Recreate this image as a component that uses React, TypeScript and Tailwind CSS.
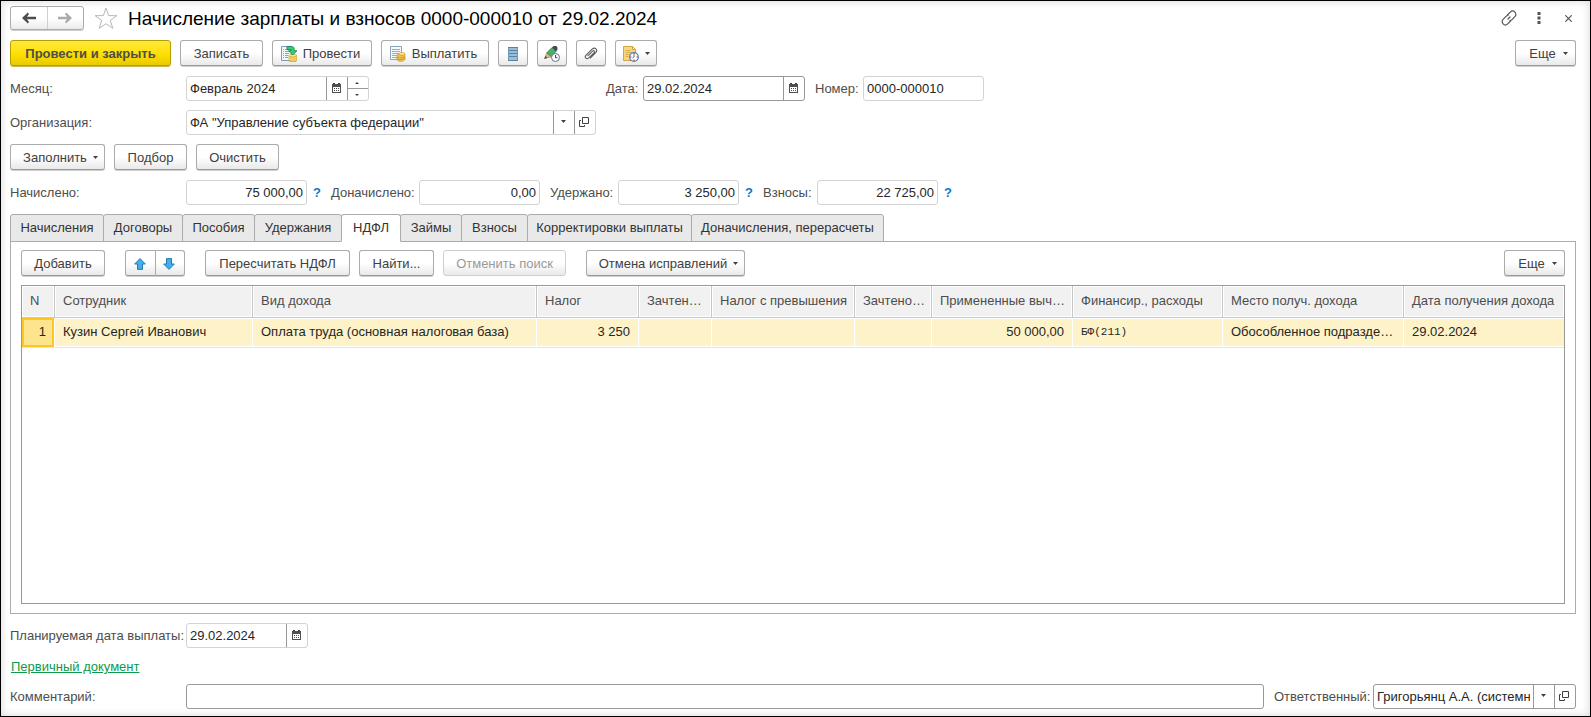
import { useState } from "react";
import type { ReactNode } from "react";
import clsx from "clsx";

/* ---------- Icons ---------- */

const NavArrow = ({ back }: { back?: boolean }) => (
  <svg width="16" height="12" viewBox="0 0 16 12" className={back ? "" : "rotate-180"}>
    <path d="M6.8.5 1 6l5.8 5.500L8 10 6 7.300h9V4.700H6L8 2Z" fill="currentColor" />
  </svg>
);

const Star = () => (
  <svg width="24" height="23" viewBox="0 0 24 23" fill="none" stroke="#b3b6ba">
    <path d="M12 1.2 14.7 8.6 22.8 8.7 16.3 13.5 18.8 21.3 12 16.7 5.2 21.3 7.7 13.5 1.2 8.7 9.3 8.6Z" />
  </svg>
);

const Caret = () => (
  <svg width="5" height="3" viewBox="0 0 5 3" className="shrink-0">
    <path d="M0 0h5L2.5 3Z" fill="#404040" />
  </svg>
);

const CaretSmall = ({ up }: { up?: boolean }) => (
  <svg width="4" height="2" viewBox="0 0 4 2" className={up ? "rotate-180" : ""}>
    <path d="M0 0h4L2 2Z" fill="#404040" />
  </svg>
);

const Calendar = () => (
  <svg width="9" height="10" viewBox="0 0 9 10" shapeRendering="crispEdges">
    <path d="M0 1h9v9H0Z" fill="#505050" />
    <path d="M1 0h2v1H1ZM6 0h2v1H6Z" fill="#404040" />
    <path d="M1 4h7v5H1Z" fill="#fff" />
    <path d="M2 5h1v1H2ZM4 5h1v1H4ZM6 5h1v1H6ZM2 7h1v1H2ZM4 7h1v1H4ZM6 7h1v1H6Z" fill="#505050" />
  </svg>
);

const OpenIcon = () => (
  <svg width="10" height="10" viewBox="0 0 10 10" fill="none" stroke="#404040">
    <path d="M3.5.5h6v6h-6Z" />
    <path d="M2 3.5H.5v6h5V8" />
  </svg>
);

const LinkIcon = () => (
  <svg width="16" height="16" viewBox="0 0 16 16" fill="none" stroke="#555" strokeWidth="1.2" strokeLinecap="round">
    <path d="M6.4 5 9.300 2.100a3.200 3.200 0 0 1 4.600 4.600L11 9.600a3 3 0 0 1-2 .9" />
    <path d="M9.600 11 6.700 13.900a3.200 3.200 0 0 1-4.600-4.600L5 6.400a3 3 0 0 1 2-.9" />
    <path d="m7 9 2-2" />
  </svg>
);

const Coins = () => (
  <g>
    <path d="M8 9.500v5c0 2 7.500 2 7.500 0v-5Z" fill="#eebf3c" stroke="#c08e1c" strokeWidth=".6" />
    <path d="M8 11.300c1.500 1.200 6 1.200 7.500 0M8 13.200c1.500 1.200 6 1.200 7.500 0" fill="none" stroke="#fbe596" strokeWidth=".8" />
    <ellipse cx="11.750" cy="9.500" rx="3.750" ry="1.500" fill="#ffe27a" stroke="#c9982a" strokeWidth=".6" />
  </g>
);

const PostIcon = () => (
  <svg width="16" height="16" viewBox="0 0 16 16">
    <path d="M.5.5h10v14H.5Z" fill="#f4f7fa" stroke="#7f9bb0" />
    <path d="M2 3.500h1M4 3.500h5M2 5.500h1M4 5.500h5M2 7.500h1M4 7.500h4M2 9.500h1M4 9.500h3M2 11.500h1M4 11.500h3" stroke="#8aa4b8" />
    <Coins />
    <path d="M6 .5h4.500c1.800 0 2.700 1 2.700 2.500v1.700H16L11.700 9 7.600 4.700h2.600V3.600H6Z" fill="#2fd07a" stroke="#12814a" strokeWidth=".8" />
  </svg>
);

const PayIcon = () => (
  <svg width="16" height="16" viewBox="0 0 16 16">
    <path d="M.5.5h11v13H.5Z" fill="#f4f9fd" stroke="#87a6bc" />
    <path d="M2 3.500h8M2 5.500h8M2 7.500h8M2 9.500h5M2 11.500h5" stroke="#8fb0c7" />
    <path d="M7 9.500c0-1.600 2-1.500 2.500-2.300 1-1.200 5.500-1 5.500.6v5.500c-.6 2.500-7.500 2.700-8 .2Z" fill="#f2c24a" stroke="#bd8a1d" strokeWidth=".6" />
    <path d="M9 8.600c1.700.9 4.500.7 6-.4M7 11.200c1.800 1 6 .8 8-.7M7 13c1.800 1 6 .8 8-.7" fill="none" stroke="#b98a22" strokeWidth=".6" />
    <ellipse cx="12" cy="7.700" rx="2.800" ry="1" fill="#ffe690" />
  </svg>
);

const ListIcon = () => (
  <svg width="12" height="14" viewBox="0 0 12 14" shapeRendering="crispEdges">
    <path d="M1 0h10v14H1Z" fill="#9dbdd4" />
    <path d="M1 0h10v1H1ZM1 3h10v1H1ZM1 6h10v1H1ZM1 9h10v1H1ZM1 13h10v1H1Z" fill="#5584a5" />
    <path d="M1 1h1v12H1ZM10 1h1v12h-1Z" fill="#6e98b5" />
  </svg>
);

const PencilClock = () => (
  <svg width="16" height="16" viewBox="0 0 16 16">
    <path d="M.5 12.500 3 6.500l5 4.300Z" fill="#d8b48a" stroke="#8a6d48" strokeWidth=".5" />
    <path d="M.3 13 1.500 10l1.900 1.700Z" fill="#444" />
    <path d="M2.800 6.800 8 1.600l4 3.800-4.700 5.200Z" fill="#4db069" stroke="#2f7f48" strokeWidth=".8" />
    <path d="M8 1.600 9.600 0h2.800l1 1.200v2.700L12 5.400Z" fill="#3f4d59" />
    <circle cx="11.500" cy="11.500" r="4" fill="#fff" stroke="#5d7486" />
    <path d="M11.500 9v2.700h2" fill="none" stroke="#33475a" />
  </svg>
);

const Clip = () => (
  <svg width="14" height="14" viewBox="0 0 14 14" fill="none" stroke="#5a5a5a" strokeWidth="1.100" strokeLinecap="round">
    <path d="m4 8.700 4.600-4.600c1.300-1.200 2.800.2 1.600 1.500l-5.400 5.300c-2.200 2-4.800-.4-2.700-2.700l6-6c2.900-2.600 6.200.5 3.600 3.500l-5.200 5.200" />
  </svg>
);

const DocClock = () => (
  <svg width="16" height="16" viewBox="0 0 16 16">
    <path d="M.5.5h9l3 3v11H.5Z" fill="#f5d782" stroke="#d2a646" />
    <path d="M9.500.5v3h3Z" fill="#fff1bf" stroke="#d2a646" />
    <path d="M2.500 4.500h5M2.500 6.500h7M2.500 8.500h4M2.500 10.500h3" stroke="#d9b055" />
    <circle cx="11" cy="11" r="4.300" fill="#fff" stroke="#4c7fae" strokeWidth="1.200" />
    <path d="M11 8.500V11l-1.600 1" fill="none" stroke="#31506c" strokeWidth=".8" />
    <path d="M10.400 7.200h1.200v1.200h-1.200ZM10.400 13.600h1.200v1.200h-1.200ZM7.200 10.400h1.200v1.200H7.200ZM13.600 10.400h1.200v1.200h-1.200Z" fill="#d22" />
  </svg>
);

const BlueArrow = ({ down }: { down?: boolean }) => (
  <svg width="12" height="12" viewBox="0 0 12 12" className={down ? "rotate-180" : ""}>
    <path d="M6 .6 11.300 6H8.500v5.400h-5V6H.7Z" fill="#41aef0" stroke="#2878ad" strokeLinejoin="round" />
  </svg>
);

/* ---------- Controls ---------- */

type ButtonProps = {
  children: ReactNode;
  className?: string;
  label?: string;
  disabled?: boolean;
};

const Button = ({ children, className, label, disabled }: ButtonProps) => (
  <button
    type="button"
    aria-label={label}
    disabled={disabled}
    className={clsx(
      "flex h-[26px] shrink-0 items-center justify-center rounded-[3px] border bg-linear-to-b from-white from-50% to-[#e9e9e9] pt-px whitespace-nowrap",
      disabled
        ? "border-[#cfcfcf] text-[#999]"
        : "border-[#ababab] border-b-[#999] text-[#404040] shadow-[0_1px_0_#d0d0d0]",
      className,
    )}
  >
    {children}
  </button>
);

type FieldProps = {
  id: string;
  value: string;
  className?: string;
  strong?: boolean;
  right?: boolean;
  children?: ReactNode;
};

const Field = ({ id, value, className, strong, right, children }: FieldProps) => (
  <div
    className={clsx(
      "flex h-[25px] overflow-hidden rounded-[3px] border bg-white",
      strong ? "border-[#999]" : "border-[#d3d3d3]",
      className,
    )}
  >
    <input
      id={id}
      defaultValue={value}
      className={clsx("w-full min-w-0 flex-1 px-[3px] text-[#262626] outline-none", right && "text-right")}
    />
    {children}
  </div>
);

const FieldButton = ({ label, children }: { label: string; children: ReactNode }) => (
  <button
    type="button"
    aria-label={label}
    className="flex w-[21px] shrink-0 items-center justify-center border-l border-[#999] pr-[2px] pb-[2px]"
  >
    {children}
  </button>
);

const Help = () => (
  <button type="button" aria-label="Справка" className="w-6 shrink-0 pr-1 text-center font-bold text-[#0a7cc4]">
    ?
  </button>
);

/* ---------- Data ---------- */

const tabs = [
  { title: "Начисления", width: "w-[94px]" },
  { title: "Договоры", width: "w-[80px]" },
  { title: "Пособия", width: "w-[73px]" },
  { title: "Удержания", width: "w-[88px]" },
  { title: "НДФЛ", width: "w-[60px]" },
  { title: "Займы", width: "w-[62px]" },
  { title: "Взносы", width: "w-[67px]" },
  { title: "Корректировки выплаты", width: "w-[165px]" },
  { title: "Доначисления, перерасчеты", width: "w-[193px]" },
];

const columns = [
  { title: "N", width: "w-[33px]" },
  { title: "Сотрудник", width: "w-[198px]" },
  { title: "Вид дохода", width: "w-[284px]" },
  { title: "Налог", width: "w-[102px]" },
  { title: "Зачтен…", width: "w-[73px]" },
  { title: "Налог с превышения", width: "w-[143px]" },
  { title: "Зачтено…", width: "w-[77px]" },
  { title: "Примененные выч…", width: "w-[141px]" },
  { title: "Финансир., расходы", width: "w-[150px]" },
  { title: "Место получ. дохода", width: "w-[181px]" },
  { title: "Дата получения дохода", width: "" },
];

const row = [
  { text: "1", right: true, selected: true },
  { text: "Кузин Сергей Иванович" },
  { text: "Оплата труда (основная налоговая база)" },
  { text: "3 250", right: true },
  { text: "" },
  { text: "" },
  { text: "" },
  { text: "50 000,00", right: true },
  { text: "БФ(211)", mono: true },
  { text: "Обособленное подразде…" },
  { text: "29.02.2024" },
];

export default function App() {
  const [active, setActive] = useState("НДФЛ");

  return (
    <div className="flex min-h-screen flex-col border border-black bg-white pt-[5px] pr-[14px] pb-[7px] pl-[9px] font-['Liberation_Sans',Arial,sans-serif] text-[13px] leading-4 text-[#4d4d4d] shadow-[inset_0_0_8px_#d9d4d6]">
      {/* Заголовок */}
      <header className="flex h-6 items-center">
        <div className="flex h-6 w-[74px] rounded-[3px] border border-[#ababab] bg-linear-to-b from-white from-50% to-[#ebebeb] shadow-[0_1px_0_#d0d0d0]">
          <button type="button" aria-label="Назад" className="flex flex-1 items-center justify-center border-r border-[#d0d0d0]">
            <NavArrow back />
          </button>
          <button type="button" aria-label="Вперед" className="flex flex-1 items-center justify-center text-[#aaa]">
            <NavArrow />
          </button>
        </div>
        <button type="button" aria-label="В избранное" className="ml-[10px]">
          <Star />
        </button>
        <h1 className="ml-[10px] pt-px text-[19px] leading-6 whitespace-nowrap text-black">
          Начисление зарплаты и взносов 0000-000010 от 29.02.2024
        </h1>
        <div className="ml-auto flex items-center">
          <button type="button" aria-label="Ссылка"><LinkIcon /></button>
          <button type="button" aria-label="Меню" className="ml-5">
            <svg width="4" height="12" viewBox="0 0 4 12" fill="#555">
              <path d="M.5 0h3v3h-3ZM.5 4.500h3v3h-3ZM.5 9h3v3h-3Z" />
            </svg>
          </button>
          <button type="button" aria-label="Закрыть" className="mr-1 ml-6">
            <svg width="7" height="7" viewBox="0 0 7 7" stroke="#555" strokeWidth="1.200">
              <path d="m.3.3 6.400 6.400M6.700.3.3 6.700" />
            </svg>
          </button>
        </div>
      </header>

      {/* Командная панель */}
      <div className="mt-[10px] flex gap-[9px]">
        <button
          type="button"
          className="h-[26px] w-[161px] rounded-[3px] border border-[#b59c00] bg-linear-to-b from-[#ffe838] via-[#ffe100] to-[#ebca00] pt-px font-bold whitespace-nowrap text-[#4d4d4d] shadow-[0_1px_0_#c9b95a]"
        >
          Провести и закрыть
        </button>
        <Button className="w-[83px]">Записать</Button>
        <Button className="w-[100px] gap-[6px] pr-[3px]"><PostIcon />Провести</Button>
        <Button className="w-[108px] gap-[6px] pr-[3px]"><PayIcon />Выплатить</Button>
        <Button className="w-[30px]" label="Список"><ListIcon /></Button>
        <Button className="w-[30px]" label="Исправить"><PencilClock /></Button>
        <Button className="w-[30px]" label="Файлы"><Clip /></Button>
        <Button className="w-[42px] gap-[6px]" label="Отчеты"><DocClock /><Caret /></Button>
        <Button className="ml-auto w-[61px] gap-[7px] pl-[6px]">Еще<Caret /></Button>
      </div>

      <div className="mt-[10px] flex items-center">
        <label htmlFor="month" className="w-[176px] shrink-0">Месяц:</label>
        <Field id="month" value="Февраль 2024" className="w-[183px]">
          <FieldButton label="Выбрать месяц"><Calendar /></FieldButton>
          <div className="flex w-[21px] shrink-0 flex-col border-l border-[#999]">
            <button type="button" aria-label="Больше" className="flex flex-1 items-center justify-center border-b border-[#999] pr-[2px]">
              <CaretSmall up />
            </button>
            <button type="button" aria-label="Меньше" className="flex flex-1 items-center justify-center pr-[2px]">
              <CaretSmall />
            </button>
          </div>
        </Field>
        <label htmlFor="date" className="ml-[237px] w-[37px] shrink-0">Дата:</label>
        <Field id="date" value="29.02.2024" strong className="w-[162px]">
          <FieldButton label="Выбрать дату"><Calendar /></FieldButton>
        </Field>
        <label htmlFor="number" className="ml-[10px] w-12 shrink-0">Номер:</label>
        <Field id="number" value="0000-000010" className="w-[121px]" />
      </div>

      <div className="mt-[9px] flex items-center">
        <label htmlFor="org" className="w-[176px] shrink-0">Организация:</label>
        <Field id="org" value={'ФА "Управление субъекта федерации"'} className="w-[410px]">
          <FieldButton label="Выбрать"><Caret /></FieldButton>
          <FieldButton label="Открыть"><OpenIcon /></FieldButton>
        </Field>
      </div>

      <div className="mt-[9px] flex gap-[9px]">
        <Button className="w-[95px] gap-[6px] pl-[6px]">Заполнить<Caret /></Button>
        <Button className="w-[73px]">Подбор</Button>
        <Button className="w-[83px]">Очистить</Button>
      </div>

      {/* Итоги */}
      <div className="mt-[10px] flex items-center">
        <label htmlFor="accrued" className="w-[176px] shrink-0">Начислено:</label>
        <Field id="accrued" value="75 000,00" right className="w-[121px]" />
        <Help />
        <label htmlFor="extra" className="w-[88px] shrink-0">Доначислено:</label>
        <Field id="extra" value="0,00" right className="w-[121px]" />
        <label htmlFor="withheld" className="ml-[10px] w-[68px] shrink-0">Удержано:</label>
        <Field id="withheld" value="3 250,00" right className="w-[121px]" />
        <Help />
        <label htmlFor="fees" className="w-[54px] shrink-0">Взносы:</label>
        <Field id="fees" value="22 725,00" right className="w-[121px]" />
        <Help />
      </div>

      {/* Закладки */}
      <div role="tablist" className="mt-[9px] flex">
        {tabs.map((tab) => (
          <button
            key={tab.title}
            type="button"
            role="tab"
            aria-selected={tab.title === active}
            onClick={() => setActive(tab.title)}
            className={clsx(
              "relative -mr-px h-7 shrink-0 rounded-t-[3px] border border-[#ababab] text-center whitespace-nowrap text-[#333]",
              tab.title === active ? "z-10 border-b-white bg-white" : "bg-[#e9e9e9]",
              tab.width,
            )}
          >
            {tab.title}
          </button>
        ))}
      </div>

      <section className="-mt-px flex flex-1 flex-col border border-[#ababab] px-[10px] pt-2 pb-[9px]">
        <div className="flex gap-[9px]">
          <Button className="w-[84px]">Добавить</Button>
          <div className="mx-[11px] flex">
            <Button className="w-[31px] rounded-r-none pr-[2px]" label="Вверх"><BlueArrow /></Button>
            <Button className="-ml-px w-[30px] rounded-l-none pr-[2px]" label="Вниз"><BlueArrow down /></Button>
          </div>
          <Button className="w-[145px]">Пересчитать НДФЛ</Button>
          <Button className="w-[75px]">Найти...</Button>
          <Button className="w-[123px]" disabled>Отменить поиск</Button>
          <Button className="ml-[11px] w-[159px] gap-[6px] pl-[6px]">Отмена исправлений<Caret /></Button>
          <Button className="ml-auto w-[61px] gap-[7px] pl-[6px]">Еще<Caret /></Button>
        </div>

        <div className="mt-[9px] flex-1 border border-[#999]">
          <table className="w-full table-fixed border-separate border-spacing-0">
            <thead>
              <tr>
                {columns.map((col) => (
                  <th
                    key={col.title}
                    className={clsx(
                      "h-8 border-r border-b border-[#c8c8c8] bg-[#f1f1f1] pb-[2px] pl-2 text-left font-normal whitespace-nowrap shadow-[inset_0_0_0_1px_#fff] last:border-r-0",
                      col.width,
                    )}
                  >
                    {col.title}
                  </th>
                ))}
              </tr>
            </thead>
            <tbody>
              <tr>
                {row.map((cell, i) => (
                  <td
                    key={i}
                    className={clsx(
                      "h-[30px] border-r border-b border-r-white border-b-[#e3e3e3] pr-[8px] pb-[2px] pl-2 whitespace-nowrap text-[#262626] last:border-r-0",
                      cell.selected
                        ? "bg-[#fee48c] shadow-[inset_0_0_0_2px_#f9c823]"
                        : "bg-[#fef2c8] shadow-[inset_0_1px_0_#fff,inset_0_-1px_0_#fff]",
                      cell.right && "text-right",
                      cell.mono && "font-['Liberation_Mono',monospace] text-[11px]",
                    )}
                  >
                    {cell.text}
                  </td>
                ))}
              </tr>
            </tbody>
          </table>
        </div>
      </section>

      {/* Подвал */}
      <div className="mt-[9px] flex items-center">
        <label htmlFor="planned" className="w-[176px] shrink-0 whitespace-nowrap">Планируемая дата выплаты:</label>
        <Field id="planned" value="29.02.2024" className="w-[122px]">
          <FieldButton label="Выбрать дату"><Calendar /></FieldButton>
        </Field>
      </div>
      <div className="mt-[11px] h-4">
        <a href="#" className="ml-px text-[#0c9a4f] underline underline-offset-1">Первичный документ</a>
      </div>
      <div className="mt-[9px] flex items-center">
        <label htmlFor="comment" className="w-[176px] shrink-0">Комментарий:</label>
        <Field id="comment" value="" strong className="flex-1" />
        <label htmlFor="responsible" className="ml-[10px] w-[99px] shrink-0">Ответственный:</label>
        <Field id="responsible" value="Григорьянц А.А. (системный" strong className="w-[203px]">
          <FieldButton label="Выбрать"><Caret /></FieldButton>
          <FieldButton label="Открыть"><OpenIcon /></FieldButton>
        </Field>
      </div>
    </div>
  );
}
